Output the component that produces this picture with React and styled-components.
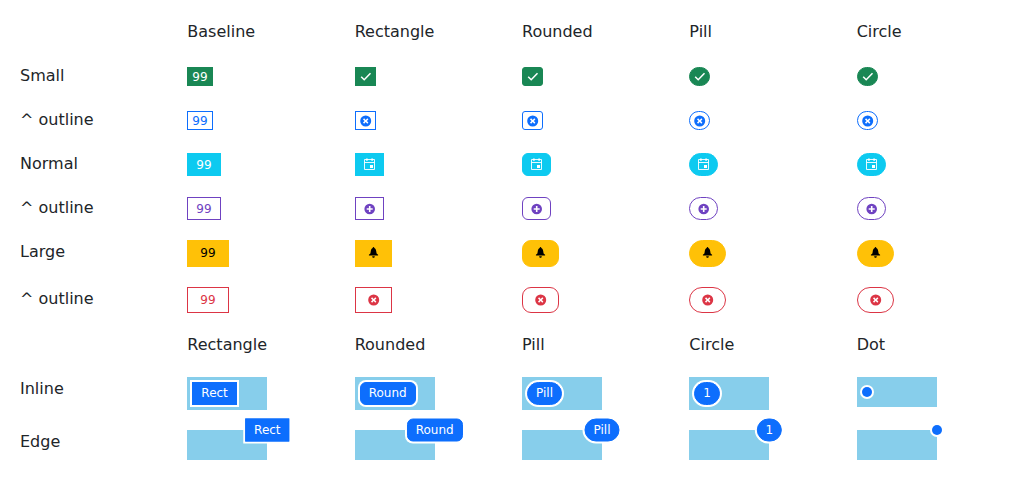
import React from "react";
import styled, { createGlobalStyle, css } from "styled-components";

const GlobalStyle = createGlobalStyle`
  body {
    margin: 0;
    background: #fff;
    color: #212529;
    font: 16px/24px "DejaVu Sans", sans-serif;
  }
`;

const Board = styled.main`
  display: grid;
  grid-template-columns: repeat(6, minmax(0, 1fr));
  gap: 20px;
  padding: 20px;
`;

const Label = styled.div`
  line-height: 24px;
`;

const Cell = styled.div`
  display: flex;
  align-items: center;
  padding-top: ${(p) => (p.$size === "large" ? 0 : 1)}px;
`;

const radii = {
  rectangle: { small: 0, normal: 0, large: 0 },
  rounded: { small: 3, normal: 6, large: 9 },
  pill: { small: 100, normal: 100, large: 100 },
  circle: { small: 100, normal: 100, large: 100 },
};

const paddings = {
  small: "3px 4px 1px",
  normal: "5px 8px 3px",
  large: "6px 12px",
};

const Badge = styled.span`
  display: inline-flex;
  align-items: center;
  box-sizing: border-box;
  border: 1px solid ${(p) => p.$color};
  border-radius: ${(p) => radii[p.$shape][p.$size]}px;
  padding: ${(p) => paddings[p.$size]};
  background: ${(p) => (p.$outline ? "transparent" : p.$color)};
  color: ${(p) => (p.$outline ? p.$color : p.$text || "#fff")};
  font-size: 12px;
  line-height: 13px;
  white-space: nowrap;
  ${(p) => p.$outline && p.$size === "large" && css`padding-bottom: 5px;`}
`;

const Icon = styled.svg`
  display: block;
  width: 11px;
  height: 13px;
  overflow: visible;
`;

const Host = styled.div`
  position: relative;
  box-sizing: border-box;
  display: flex;
  align-items: center;
  align-self: start;
  width: 80px;
  min-height: 30px;
  padding: ${(p) => (p.$edge ? "0" : "5px")};
  background: #87ceeb;
`;

const onEdge = css`
  position: absolute;
  top: 0;
  right: 0;
  transform: translate(50%, -50%);
`;

const RingBadge = styled(Badge)`
  padding: 4px 8px;
  box-shadow: 0 0 0 2px #fff;
  ${(p) => p.$edge && onEdge}
`;

const Dot = styled.span`
  width: 10px;
  height: 10px;
  border-radius: 50%;
  background: #0d6efd;
  box-shadow: 0 0 0 2px #fff;
  ${(p) => p.$edge && onEdge}
`;

const icons = {
  check: (
    <path d="M1.7 5.8 4.7 8.8 11 2.3" fill="none" stroke="currentColor" strokeWidth="1.5" />
  ),
  cross: (
    <path
      fillRule="evenodd"
      fill="currentColor"
      d="M6.2.5a5.5 5.5 0 1 1 0 11a5.5 5.5 0 0 1 0-11zM4.6 3.3 3.5 4.4 5.1 6 3.5 7.6 4.6 8.7 6.2 7.1 7.8 8.7 8.9 7.6 7.3 6 8.9 4.4 7.8 3.3 6.2 4.9z"
    />
  ),
  plus: (
    <path
      fillRule="evenodd"
      fill="currentColor"
      d="M6.2.7a5.3 5.3 0 1 1 0 10.6a5.3 5.3 0 0 1 0-10.6zM5.4 3v2.2H3.2v1.6h2.2V9H7V6.8h2.2V5.2H7V3z"
    />
  ),
  calendar: (
    <>
      <path
        d="M1 .5h10v10H1zM1 3.5h10"
        fill="none"
        stroke="currentColor"
        strokeWidth="0.9"
      />
      <path d="M2.6-.6h1.6v2.3H2.6zM7.8-.6h1.6v2.3H7.8zM6.5 6h3v3h-3z" fill="currentColor" />
    </>
  ),
  bell: (
    <path
      fill="currentColor"
      d="M6 0c.5 0 .8.4.8.9 1.2.5 1.7 1.6 1.9 3.1l.4 2.4 1.5 1.3v.9H1.4v-.9l1.5-1.3L3.300 4C3.500 2.500 4 1.400 5.200.9 5.200.4 5.500 0 6 0zM4.700 9.200h2.600c0 1-.6 1.500-1.300 1.500s-1.300-.5-1.300-1.500z"
    />
  ),
};

const rows = [
  { label: "Small", size: "small", color: "#198754", icon: "check" },
  { label: "^ outline", size: "small", color: "#0d6efd", icon: "cross", outline: true },
  { label: "Normal", size: "normal", color: "#0dcaf0", icon: "calendar" },
  { label: "^ outline", size: "normal", color: "#6f42c1", icon: "plus", outline: true },
  { label: "Large", size: "large", color: "#ffc107", icon: "bell", text: "#000" },
  { label: "^ outline", size: "large", color: "#dc3545", icon: "cross", outline: true },
];

const shapes = ["rectangle", "rounded", "pill", "circle"];

const placed = [
  { shape: "rectangle", text: "Rect" },
  { shape: "rounded", text: "Round" },
  { shape: "pill", text: "Pill" },
  { shape: "circle", text: "1" },
];

function Headings({ names }) {
  return (
    <>
      <Label />
      {names.map((name) => (
        <Label key={name}>{name}</Label>
      ))}
    </>
  );
}

function SizeRow({ row }) {
  const look = {
    $size: row.size,
    $color: row.color,
    $outline: row.outline,
    $text: row.text,
  };
  return (
    <>
      <Label>{row.label}</Label>
      <Cell $size={row.size}>
        <Badge {...look} $shape="rectangle">99</Badge>
      </Cell>
      {shapes.map((shape) => (
        <Cell key={shape} $size={row.size}>
          <Badge {...look} $shape={shape}>
            <Icon viewBox="0.5 0 11 13" aria-hidden="true">{icons[row.icon]}</Icon>
          </Badge>
        </Cell>
      ))}
    </>
  );
}

function PlacementRow({ label, edge }) {
  return (
    <>
      <Label>{label}</Label>
      {placed.map(({ shape, text }) => (
        <Host key={shape} $edge={edge}>
          <RingBadge $size="normal" $color="#0d6efd" $shape={shape} $edge={edge}>
            {text}
          </RingBadge>
        </Host>
      ))}
      <Host $edge={edge}>
        <Dot $edge={edge} />
      </Host>
    </>
  );
}

export default function App() {
  return (
    <>
      <GlobalStyle />
      <Board>
        <Headings names={["Baseline", "Rectangle", "Rounded", "Pill", "Circle"]} />
        {rows.map((row, i) => (
          <SizeRow key={i} row={row} />
        ))}
        <Headings names={["Rectangle", "Rounded", "Pill", "Circle", "Dot"]} />
        <PlacementRow label="Inline" />
        <PlacementRow label="Edge" edge />
      </Board>
    </>
  );
}
